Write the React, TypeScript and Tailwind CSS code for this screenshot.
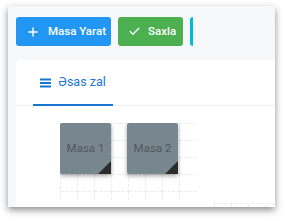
import React from "react";
import { Plus, Check } from "lucide-react";

function Table({ name }: { name: string }) {
  return (
    <div className="relative w-[51px] h-[51px] bg-[#78868f] rounded-[2px] shadow-[0_2px_4px_rgba(0,0,0,0.35)] flex items-center justify-center">
      <span className="text-[11.5px] text-[#50585d]">{name}</span>
      <div className="absolute right-0 bottom-0 w-0 h-0 border-l-[13px] border-l-transparent border-b-[13px] border-b-[#2b2b2b]" />
    </div>
  );
}

export default function App() {
  const cells = Array.from({ length: 40 });
  return (
    <div className="w-[287px] h-[221px] bg-white pt-[6px] pl-[8px] font-['Roboto',sans-serif]">
      <div className="w-[267px] h-[201px] bg-[#f7f8fa] shadow-[0_3px_7px_rgba(0,0,0,0.45)] pl-[8px] pt-[11px] flex flex-col overflow-hidden">
        <div className="flex gap-[7px] h-[29px] shrink-0">
          <button className="flex items-center gap-[8px] w-[95px] pl-[10px] bg-[#2196f3] text-white rounded-[3px] text-[11.5px] font-medium">
            <Plus size={14} strokeWidth={2.5} />
            Masa Yarat
          </button>
          <button className="flex items-center gap-[7px] w-[65px] pl-[10px] bg-[#4caf50] text-white rounded-[3px] text-[11.5px] font-medium">
            <Check size={13} strokeWidth={2.5} />
            Saxla
          </button>
          <div className="w-[3px] bg-[#00bcd4] rounded-l-[3px]" />
        </div>
        <div className="mt-[14px] flex-1 bg-white rounded-tl-[4px] flex flex-col">
          <div className="flex border-b border-[#eef0f2] pl-[17px] h-[46px] shrink-0">
            <div className="w-[80px] flex items-center justify-center gap-[7px] border-b-2 border-[#1976d2] -mb-px pt-[1px] text-[#1976d2]">
              <svg width="11" height="10" viewBox="0 0 11 10" className="text-[#1976d2]">
                <rect x="0" y="0.5" width="11" height="2" fill="currentColor" />
                <rect x="0" y="4" width="11" height="2" fill="currentColor" />
                <rect x="0" y="7.5" width="11" height="2" fill="currentColor" />
              </svg>
              <span className="text-[12.5px]">Əsas zal</span>
            </div>
          </div>
          <div className="relative mt-[17px] ml-[44px] w-[136px] h-[77px] overflow-hidden">
            <div className="grid grid-cols-[repeat(8,17px)] auto-rows-[17px] border-l border-t border-dashed border-[#ebebeb]">
              {cells.map((_, i) => (
                <div key={i} className="border-r border-b border-dashed border-[#ebebeb]" />
              ))}
            </div>
            <div className="absolute left-0 top-0">
              <Table name="Masa 1" />
            </div>
            <div className="absolute left-[67px] top-0">
              <Table name="Masa 2" />
            </div>
          </div>
          <div className="ml-[198px] mt-[3px] w-[60px] flex border-t border-l border-dashed border-[#ebebeb] h-[6px]">
            <div className="w-[17px] border-r border-dashed border-[#ebebeb]" />
            <div className="w-[17px] border-r border-dashed border-[#ebebeb]" />
            <div className="w-[17px] border-r border-dashed border-[#ebebeb]" />
          </div>
        </div>
      </div>
    </div>
  );
}
